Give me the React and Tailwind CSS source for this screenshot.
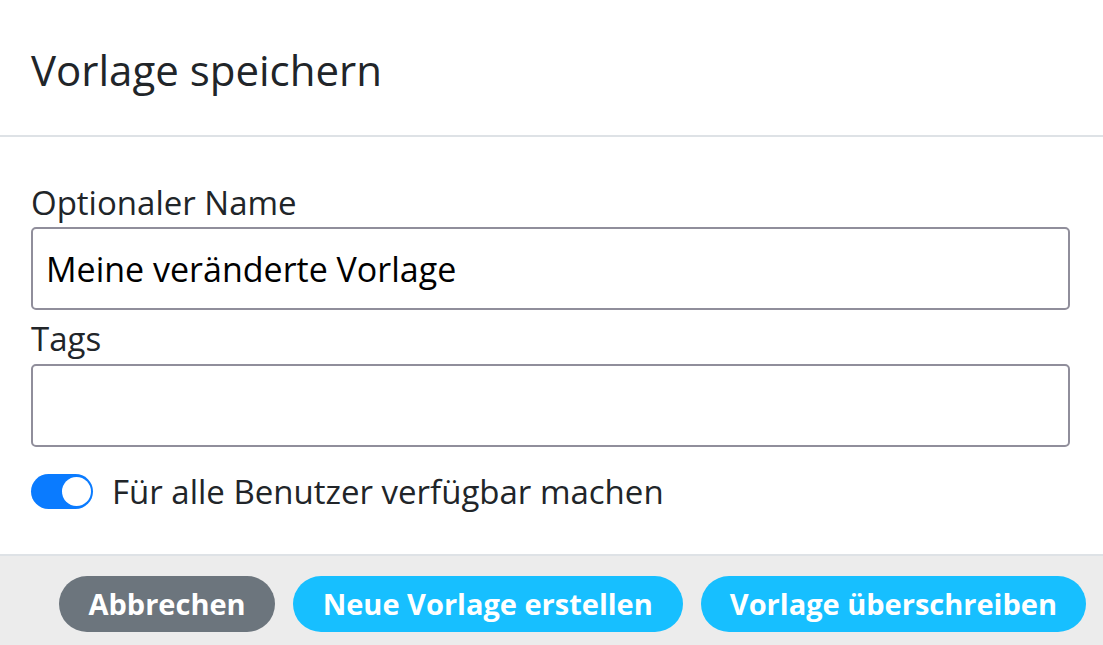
import { useState } from "react";

export default function App() {
  const [name, setName] = useState("Meine veränderte Vorlage");
  const [tags, setTags] = useState("");
  const [shared, setShared] = useState(true);

  return (
    <div
      className="w-[1103px] h-[645px] bg-white flex flex-col overflow-hidden text-[#212529]"
      style={{ fontFamily: '"Open Sans", "Noto Sans", sans-serif' }}
    >
      {/* Header */}
      <div className="h-[137px] shrink-0 border-b-2 border-[#dee2e6] flex items-center px-[31px] pt-[4px]">
        <h5 className="text-[42px] leading-none font-normal">Vorlage speichern</h5>
      </div>

      {/* Body */}
      <div className="flex-1 px-[31px] pt-[42px]">
        <label className="block text-[33px] leading-[48px]">Optionaler Name</label>
        <input
          value={name}
          onChange={(e) => setName(e.target.value)}
          className="block w-[1039px] h-[83px] border-2 border-[#908e9b] rounded-[5px] px-[13px] text-[34px] text-black outline-none"
        />
        <label className="block mt-[3px] text-[33px] leading-[51px]">Tags</label>
        <input
          value={tags}
          onChange={(e) => setTags(e.target.value)}
          className="block w-[1039px] h-[83px] border-2 border-[#908e9b] rounded-[5px] px-[13px] text-[34px] text-black outline-none"
        />

        {/* Toggle */}
        <div className="flex items-center gap-[19px] mt-[27px]">
          <button
            onClick={() => setShared(!shared)}
            className={
              shared
                ? "w-[62px] h-[35px] rounded-full bg-[#0a7bff] flex items-center justify-end px-[2px]"
                : "w-[62px] h-[35px] rounded-full bg-[#ced4da] flex items-center justify-start px-[2px]"
            }
          >
            <span className="w-[29px] h-[29px] rounded-full bg-white" />
          </button>
          <span className="text-[33px] leading-none">Für alle Benutzer verfügbar machen</span>
        </div>
      </div>

      {/* Footer */}
      <div className="h-[91px] shrink-0 border-t-2 border-[#dee2e6] bg-[#ececec] flex items-start justify-end gap-[18px] pr-[17px] pt-[20px]">
        <button className="h-[56px] px-[29px] rounded-full bg-[#6c757d] text-white text-[29px] font-bold">
          Abbrechen
        </button>
        <button className="h-[56px] px-[30px] rounded-full bg-[#17bfff] text-white text-[29px] font-bold">
          Neue Vorlage erstellen
        </button>
        <button className="h-[56px] px-[29px] rounded-full bg-[#17bfff] text-white text-[29px] font-bold">
          Vorlage überschreiben
        </button>
      </div>
    </div>
  );
}
